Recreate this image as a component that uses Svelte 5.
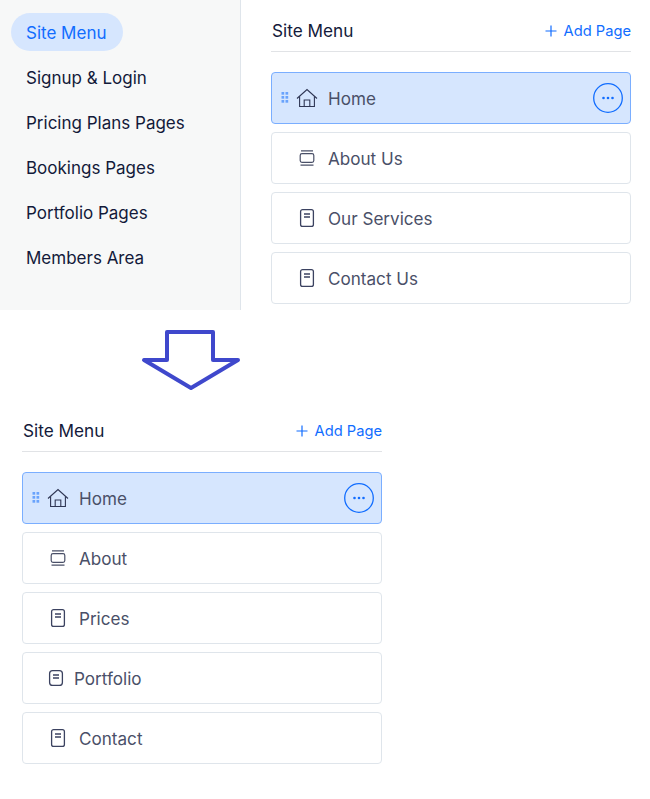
<script>
	const sections = ['Signup & Login', 'Pricing Plans Pages', 'Bookings Pages', 'Portfolio Pages', 'Members Area'];

	const before = [
		{ label: 'About Us', icon: 'stack' },
		{ label: 'Our Services', icon: 'page' },
		{ label: 'Contact Us', icon: 'page' }
	];

	const after = [
		{ label: 'About', icon: 'stack' },
		{ label: 'Prices', icon: 'page' },
		{ label: 'Portfolio', icon: 'wide' },
		{ label: 'Contact', icon: 'page' }
	];
</script>

{#snippet icon(kind)}
	{#if kind === 'home'}
		<svg class="icon" width="22" height="22" viewBox="0 0 22 22" fill="none" stroke="#2f3654" stroke-width="1.100">
			<path d="M1 11.500 11 2.500l10 9" />
			<path d="M3.600 9.500V19.500h14.800V9.500" />
			<path d="M8.200 19.500v-6.500h5.600v6.500" />
		</svg>
	{:else if kind === 'stack'}
		<svg class="icon" width="22" height="22" viewBox="0 0 22 22" fill="none" stroke="#4a5068" stroke-width="1.200">
			<path d="M5 3.800h12M4.500 18.200h13" />
			<rect x="4.200" y="6.700" width="13.600" height="8.600" rx="1.800" />
		</svg>
	{:else if kind === 'wide'}
		<svg class="icon" width="22" height="22" viewBox="0 0 22 22" fill="none" stroke="#3b4260" stroke-width="1.300">
			<rect x="4.600" y="3.600" width="12.800" height="14.800" rx="3" />
			<path d="M8 8h6M8 11h6" />
		</svg>
	{:else}
		<svg class="icon" width="22" height="22" viewBox="0 0 22 22" fill="none" stroke="#3b4260" stroke-width="1.300">
			<rect x="4.600" y="2.600" width="12.800" height="16.800" rx="2" />
			<path d="M8 7h6M8 10h6" />
		</svg>
	{/if}
{/snippet}

{#snippet panel(pages)}
	<section class="panel">
		<header class="panel-head">
			<span class="panel-title">Site Menu</span>
			<span class="add">
				<svg width="12" height="12" viewBox="0 0 12 12" stroke="#116dff" stroke-width="1.200"><path d="M6 .5v11M.5 6h11" /></svg>
				Add Page
			</span>
		</header>
		<ul class="rows">
			<li class="row selected">
				<svg class="grip" width="8" height="12" viewBox="0 0 8 12" fill="#6aa3fc">
					{#each [0, 4, 8] as y}
						<rect x="0.500" {y} width="2.700" height="2.700" />
						<rect x="4.500" {y} width="2.700" height="2.700" />
					{/each}
				</svg>
				{@render icon('home')}
				<span class="label">Home</span>
				<svg class="more" width="30" height="30" viewBox="0 0 30 30">
					<circle cx="15" cy="15" r="14.300" fill="none" stroke="#116dff" stroke-width="1.300" />
					<circle cx="10.500" cy="15" r="1.300" fill="#116dff" />
					<circle cx="15" cy="15" r="1.300" fill="#116dff" />
					<circle cx="19.500" cy="15" r="1.300" fill="#116dff" />
				</svg>
			</li>
			{#each pages as page}
				<li class="row" class:tight={page.icon === 'wide'}>
					{@render icon(page.icon)}
					<span class="label">{page.label}</span>
				</li>
			{/each}
		</ul>
	</section>
{/snippet}

<main class="page">
	<div class="top">
		<nav class="sidebar">
			<a class="nav-item active">Site Menu</a>
			{#each sections as section}
				<a class="nav-item">{section}</a>
			{/each}
		</nav>
		<div class="top-panel">
			{@render panel(before)}
		</div>
	</div>

	<svg class="arrow" width="110" height="90" viewBox="0 0 110 90" fill="#fff" stroke="#3f48cc" stroke-width="4" stroke-linejoin="round">
		<path d="M27 22h46v28h25L51 78 4 50h23z" />
	</svg>

	<div class="bottom-panel">
		{@render panel(after)}
	</div>
</main>

<style>
	:global(body) {
		background: #fff;
		font-family: Inter, "Noto Sans", sans-serif;
	}

	.page {
		width: 650px;
		height: 799px;
		overflow: hidden;
	}

	.top {
		display: flex;
		height: 310px;
	}

	.sidebar {
		box-sizing: border-box;
		width: 241px;
		padding: 13px 0 0 11px;
		display: flex;
		flex-direction: column;
		align-items: flex-start;
		gap: 7px;
		background: #f7f8f8;
		border-right: 1px solid #dfe5eb;
	}

	.nav-item {
		height: 38px;
		line-height: 40px;
		padding: 0 15px;
		border-radius: 19px;
		font-size: 17px;
		color: #131a3a;
		white-space: nowrap;
	}

	.nav-item.active {
		padding-right: 17px;
		background: #d6e6fe;
		color: #116dff;
	}

	.top-panel {
		padding-left: 30px;
	}

	.arrow {
		display: block;
		margin-left: 140px;
	}

	.bottom-panel {
		padding-left: 22px;
	}

	.panel {
		width: 360px;
		padding-top: 10px;
	}

	.panel-head {
		box-sizing: border-box;
		height: 42px;
		padding-left: 1px;
		display: flex;
		align-items: center;
		justify-content: space-between;
		border-bottom: 1px solid #e1e3e6;
	}

	.panel-title {
		font-size: 17.200px;
		color: #131a3a;
	}

	.add {
		display: flex;
		align-items: center;
		gap: 7px;
		font-size: 14.700px;
		color: #116dff;
	}

	.rows {
		list-style: none;
		margin: 20px 0 0;
		padding: 0;
		display: flex;
		flex-direction: column;
		gap: 8px;
	}

	.row {
		position: relative;
		box-sizing: border-box;
		height: 52px;
		padding-left: 24px;
		display: flex;
		align-items: center;
		gap: 10px;
		background: #fff;
		border: 1px solid #dfe5eb;
		border-radius: 4px;
		font-size: 17.100px;
		color: #4a5068;
	}

	.row.tight {
		padding-left: 22px;
		gap: 7px;
	}

	.row.selected {
		background: #d6e6fe;
		border-color: #7aaeff;
	}

	.grip {
		position: absolute;
		left: 9px;
		top: 19px;
	}

	.icon {
		flex: none;
	}

	.label {
		white-space: nowrap;
	}

	.more {
		flex: none;
		margin-left: auto;
		margin-right: 7px;
	}
</style>
